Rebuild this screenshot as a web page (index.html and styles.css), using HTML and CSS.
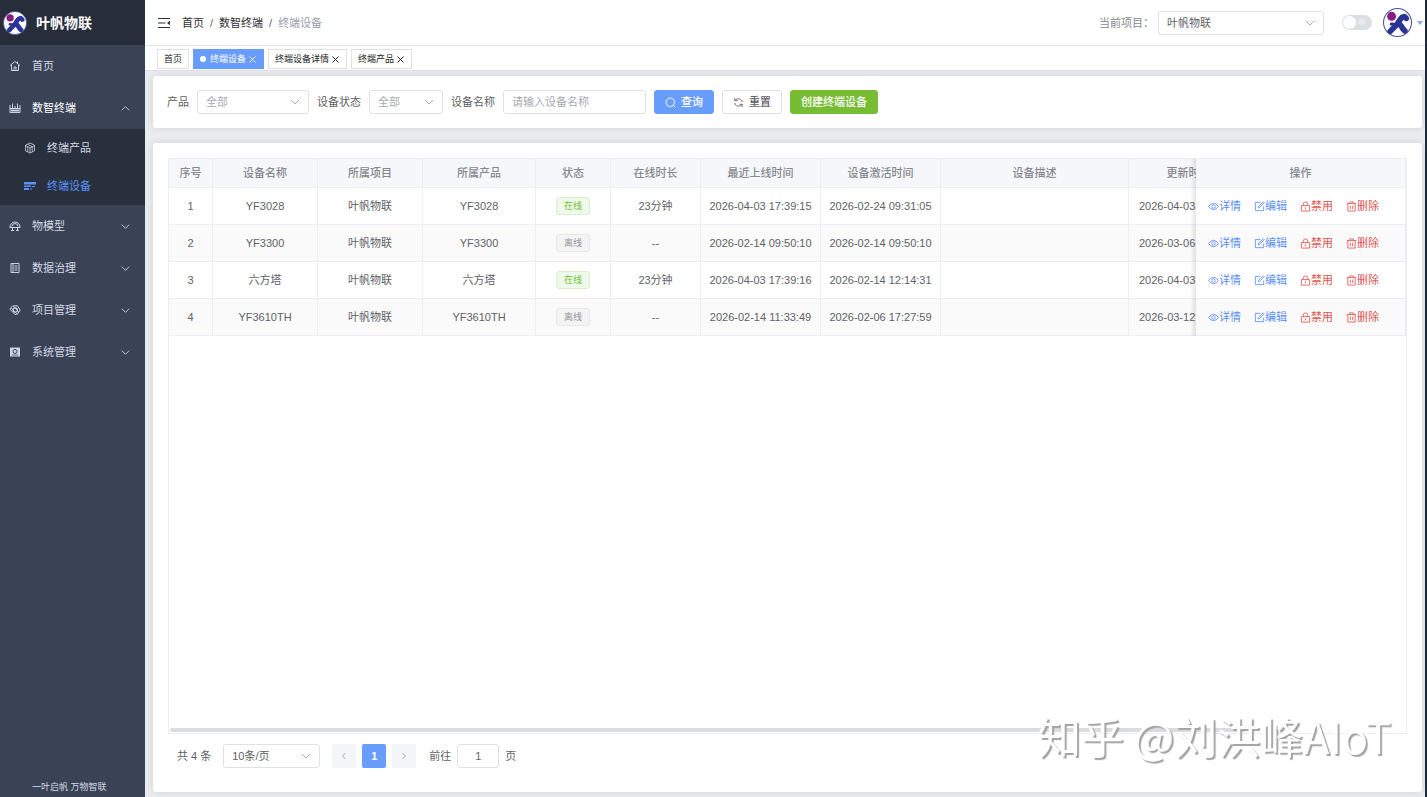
FILE: index.html
```html
<!DOCTYPE html>
<html lang="zh-CN">
<head>
<meta charset="utf-8">
<title>叶帆物联 - 终端设备</title>
<link rel="stylesheet" href="styles.css">
</head>
<body>
<svg class="sprite" aria-hidden="true">
  <symbol id="logo" viewBox="0 0 28 28"><circle cx="14" cy="14" r="13.5" fill="#fff" stroke="#4a528f" stroke-width="1"/><g fill="none" stroke="#2b3494" stroke-linecap="round" stroke-linejoin="round"><path d="M22.500 10c-1.500-2.500-4-2-5.500.5L13.500 16 7 22.500" stroke-width="5.400"/><path d="M14.500 15c3.500 1 3.500 4.500 6.500 7" stroke-width="5.600"/><path d="M8 15.500l5 .5" stroke-width="3"/></g><circle cx="8.300" cy="8" r="4.300" fill="#8a1c86"/></symbol>
  <symbol id="down" viewBox="0 0 12 12"><path d="M2 4l4 4 4-4" fill="none" stroke="currentColor"/></symbol>
  <symbol id="up" viewBox="0 0 12 12"><path d="M2 8l4-4 4 4" fill="none" stroke="currentColor"/></symbol>
  <symbol id="left" viewBox="0 0 12 12"><path d="M7.500 3l-3 3 3 3" fill="none" stroke="currentColor"/></symbol>
  <symbol id="right" viewBox="0 0 12 12"><path d="M4.500 3l3 3-3 3" fill="none" stroke="currentColor"/></symbol>
  <symbol id="close" viewBox="0 0 12 12"><path d="M2 2l8 8m0-8l-8 8" fill="none" stroke="currentColor" stroke-width="1.300"/></symbol>
  <symbol id="fold" viewBox="0 0 12 12"><path d="M0 1.500h12M0 6h7.500M0 10.500h12" fill="none" stroke="currentColor" stroke-width="1.200"/><path d="M12 3.800v4.400L9 6z" fill="currentColor"/></symbol>
  <symbol id="home" viewBox="0 0 12 12"><path d="M1 5.500L6 1.500l5 4M2.500 5v5.500h7V5M5 10.500V7h2v3.500M8.500 1.500v2" fill="none" stroke="currentColor"/></symbol>
  <symbol id="hub" viewBox="0 0 12 12"><path d="M1 6.500h10v4H1zM3.500 6V1.500M8.500 6V1.500M6 6V4M1 3v4M11 3v4" fill="none" stroke="currentColor"/><path d="M2 7.500h8v2H2z" fill="currentColor"/></symbol>
  <symbol id="cube" viewBox="0 0 12 12"><path d="M6 1l4.500 2.200v5.600L6 11 1.500 8.800V3.200zM1.500 3.500L6 6l4.500-2.500M6 6v5M3.800 4.800v5M8.200 4.800v5M3.800 2.500L8 4.600" fill="none" stroke="currentColor" stroke-width=".8"/></symbol>
  <symbol id="device" viewBox="0 0 12 12"><path d="M0 2h12v2.500H0zM0 5.500h7V7H0zM0 8h5v2H0zM8 6h3v1H8zM6 8.500h2v1H6z" fill="currentColor"/></symbol>
  <symbol id="model" viewBox="0 0 12 12"><path d="M1 7a5 5 0 0110 0M3 6.500a3 3 0 016 0M0.500 7.500h11M3.500 8v3M8.500 8v3M2 10.500h3M7 10.500h3" fill="none" stroke="currentColor"/></symbol>
  <symbol id="book" viewBox="0 0 12 12"><path d="M2 1.500h8v9H2zM4 1.500v9M5.500 4h3M5.500 6h3M5.500 8h3" fill="none" stroke="currentColor"/></symbol>
  <symbol id="project" viewBox="0 0 12 12"><path d="M3.500 2l5-.2L11.200 6 8.500 10 6 10.500.8 5z" fill="none" stroke="currentColor"/><circle cx="6.200" cy="6" r="2.200" fill="none" stroke="currentColor" stroke-width="1.200"/><path d="M2 4l6 6M4 2l6 6" stroke="currentColor" stroke-width=".7"/></symbol>
  <symbol id="system" viewBox="0 0 12 12"><path d="M1 1.500h10v9H1z" fill="currentColor"/><circle cx="6" cy="5.500" r="2" fill="none" stroke="#3a4356"/><path d="M3 9h6" stroke="#3a4356" stroke-width=".7"/></symbol>
  <symbol id="search" viewBox="0 0 12 12"><circle cx="5.800" cy="5.800" r="4.600" fill="none" stroke="currentColor"/><path d="M9 9l2.200 2.200" stroke="currentColor"/></symbol>
  <symbol id="refresh" viewBox="0 0 12 12"><path d="M2 1v3h3M2.200 3.800C4 1.500 8 1.200 9.800 4.200v1.300M10 11V8H7M9.800 8.200C8 10.500 4 10.800 2.200 7.800V6.500" fill="none" stroke="currentColor"/></symbol>
  <symbol id="eye" viewBox="0 0 12 12"><path d="M.5 6Q6-1 11.500 6 6 13 .5 6z" fill="none" stroke="currentColor" stroke-width=".9"/><circle cx="6" cy="6" r="1.900" fill="none" stroke="currentColor" stroke-width=".9"/></symbol>
  <symbol id="edit" viewBox="0 0 12 12"><path d="M7 1.500H1.500v9h9V6M4.500 7.500l.3-1.500L10.200.8l1 1L6 7.200z" fill="none" stroke="currentColor" stroke-width=".9"/></symbol>
  <symbol id="lock" viewBox="0 0 12 12"><path d="M1.500 5h9v6h-9zM3.500 5V3.500a2.500 2.500 0 015 0V5M6 7v2" fill="none" stroke="currentColor" stroke-width=".9"/></symbol>
  <symbol id="trash" viewBox="0 0 12 12"><path d="M.8 2.800h10.400M4 2.800V1h4v1.800M2 2.800V11h8V2.800M4.700 5v4M7.300 5v4" fill="none" stroke="currentColor" stroke-width=".9"/></symbol>
</svg>
<div class="app">
  <aside class="side">
    <div class="brand"><svg class="brand-logo"><use href="#logo"/></svg><strong>叶帆物联</strong></div>
    <nav class="menu">
      <a class="item" href="#"><svg class="ico"><use href="#home"/></svg>首页</a>
      <a class="item open" href="#"><svg class="ico"><use href="#hub"/></svg>数智终端<svg class="ico arrow"><use href="#up"/></svg></a>
      <div class="sub">
        <a class="subitem" href="#"><svg class="ico"><use href="#cube"/></svg>终端产品</a>
        <a class="subitem active" href="#"><svg class="ico"><use href="#device"/></svg>终端设备</a>
      </div>
      <a class="item" href="#"><svg class="ico"><use href="#model"/></svg>物模型<svg class="ico arrow"><use href="#down"/></svg></a>
      <a class="item" href="#"><svg class="ico"><use href="#book"/></svg>数据治理<svg class="ico arrow"><use href="#down"/></svg></a>
      <a class="item" href="#"><svg class="ico"><use href="#project"/></svg>项目管理<svg class="ico arrow"><use href="#down"/></svg></a>
      <a class="item" href="#"><svg class="ico"><use href="#system"/></svg>系统管理<svg class="ico arrow"><use href="#down"/></svg></a>
    </nav>
    <div class="slogan">一叶启帆 万物智联</div>
  </aside>
  <div class="body">
    <header class="top">
      <button class="plain" aria-label="折叠菜单"><svg class="ico"><use href="#fold"/></svg></button>
      <nav class="crumbs"><a href="#">首页</a><i>/</i><a href="#">数智终端</a><i>/</i><span>终端设备</span></nav>
      <div class="tools">
        <label for="project-select">当前项目：</label>
        <div class="select wide"><select id="project-select"><option>叶帆物联</option></select><svg class="ico"><use href="#down"/></svg></div>
        <input class="switch" type="checkbox" role="switch" aria-label="主题">
        <button class="plain user" aria-label="用户"><svg class="avatar"><use href="#logo"/></svg><i class="caret"></i></button>
      </div>
    </header>
    <nav class="tags">
      <a class="tag" href="#">首页</a>
      <a class="tag current" href="#"><i class="dot"></i>终端设备<svg class="x"><use href="#close"/></svg></a>
      <a class="tag" href="#">终端设备详情<svg class="x"><use href="#close"/></svg></a>
      <a class="tag" href="#">终端产品<svg class="x"><use href="#close"/></svg></a>
    </nav>
    <main class="main">
      <form class="card filters">
        <label for="product">产品</label>
        <div class="select product"><select id="product" class="muted"><option>全部</option></select><svg class="ico"><use href="#down"/></svg></div>
        <label for="state">设备状态</label>
        <div class="select state"><select id="state" class="muted"><option>全部</option></select><svg class="ico"><use href="#down"/></svg></div>
        <label for="name">设备名称</label>
        <input id="name" class="text name" type="text" placeholder="请输入设备名称">
        <button class="btn primary" type="button"><svg class="ico"><use href="#search"/></svg>查询</button>
        <button class="btn" type="button"><svg class="ico"><use href="#refresh"/></svg>重置</button>
        <button class="btn success" type="button">创建终端设备</button>
      </form>
      <section class="card list">
        <div class="table-box">
          <table>
            <colgroup><col class="w44"><col class="w105"><col class="w105"><col class="w113"><col class="w75"><col class="w90"><col class="w120"><col class="w120"><col><col class="w120"><col class="w210"></colgroup>
            <thead><tr><th>序号</th><th>设备名称</th><th>所属项目</th><th>所属产品</th><th>状态</th><th>在线时长</th><th>最近上线时间</th><th>设备激活时间</th><th>设备描述</th><th>更新时间</th><th class="fixed">操作</th></tr></thead>
            <tbody>
              <tr><td>1</td><td>YF3028</td><td>叶帆物联</td><td>YF3028</td><td><span class="badge on">在线</span></td><td>23分钟</td><td>2026-04-03 17:39:15</td><td>2026-02-24 09:31:05</td><td></td><td class="date">2026-04-03</td><td class="fixed"><div class="ops"><button><svg class="ico"><use href="#eye"/></svg>详情</button><button><svg class="ico"><use href="#edit"/></svg>编辑</button><button class="danger"><svg class="ico"><use href="#lock"/></svg>禁用</button><button class="danger"><svg class="ico"><use href="#trash"/></svg>删除</button></div></td></tr>
              <tr><td>2</td><td>YF3300</td><td>叶帆物联</td><td>YF3300</td><td><span class="badge">离线</span></td><td>--</td><td>2026-02-14 09:50:10</td><td>2026-02-14 09:50:10</td><td></td><td class="date">2026-03-06</td><td class="fixed"><div class="ops"><button><svg class="ico"><use href="#eye"/></svg>详情</button><button><svg class="ico"><use href="#edit"/></svg>编辑</button><button class="danger"><svg class="ico"><use href="#lock"/></svg>禁用</button><button class="danger"><svg class="ico"><use href="#trash"/></svg>删除</button></div></td></tr>
              <tr><td>3</td><td>六方塔</td><td>叶帆物联</td><td>六方塔</td><td><span class="badge on">在线</span></td><td>23分钟</td><td>2026-04-03 17:39:16</td><td>2026-02-14 12:14:31</td><td></td><td class="date">2026-04-03</td><td class="fixed"><div class="ops"><button><svg class="ico"><use href="#eye"/></svg>详情</button><button><svg class="ico"><use href="#edit"/></svg>编辑</button><button class="danger"><svg class="ico"><use href="#lock"/></svg>禁用</button><button class="danger"><svg class="ico"><use href="#trash"/></svg>删除</button></div></td></tr>
              <tr><td>4</td><td>YF3610TH</td><td>叶帆物联</td><td>YF3610TH</td><td><span class="badge">离线</span></td><td>--</td><td>2026-02-14 11:33:49</td><td>2026-02-06 17:27:59</td><td></td><td class="date">2026-03-12</td><td class="fixed"><div class="ops"><button><svg class="ico"><use href="#eye"/></svg>详情</button><button><svg class="ico"><use href="#edit"/></svg>编辑</button><button class="danger"><svg class="ico"><use href="#lock"/></svg>禁用</button><button class="danger"><svg class="ico"><use href="#trash"/></svg>删除</button></div></td></tr>
            </tbody>
          </table>
          <div class="thumb"></div>
        </div>
        <div class="pager">
          <span>共 4 条</span>
          <div class="select size"><select aria-label="每页条数"><option>10条/页</option></select><svg class="ico"><use href="#down"/></svg></div>
          <div class="pages">
            <button aria-label="上一页"><svg class="ico"><use href="#left"/></svg></button>
            <button class="now">1</button>
            <button aria-label="下一页"><svg class="ico"><use href="#right"/></svg></button>
          </div>
          <label class="goto">前往<input class="text" type="text" value="1">页</label>
        </div>
      </section>
    </main>
  </div>
  <div class="watermark">知乎 @刘洪峰AIoT</div>
</div>
</body>
</html>
```
FILE: styles.css
```css
* { box-sizing: border-box; }
body { margin: 0; font: 11px/16px "Liberation Sans", "Noto Sans CJK SC", sans-serif; color: #606266; }
button, input, select { font: inherit; color: inherit; margin: 0; }
button { cursor: pointer; }
a { color: inherit; text-decoration: none; }
i { font-style: normal; }
.sprite { display: none; }
.ico { width: 12px; height: 12px; flex: none; }
.app { position: relative; display: flex; min-height: 100vh; border-right: 2px solid #1e2a3a; overflow: hidden; }

.side { width: 145px; flex: none; display: flex; flex-direction: column; background: #3a4356; color: #d3d8e2; }
.brand { height: 45px; display: flex; align-items: center; gap: 9px; padding-left: 3px; background: #272d3b; color: #fff; font-size: 14px; }
.brand-logo { width: 24px; height: 24px; }
.menu { flex: 1; }
.item { height: 42px; display: flex; align-items: center; gap: 11px; padding: 0 14px 0 9px; }
.item.open { color: #fff; }
.item .ico { color: #cdd3de; }
.item .arrow { width: 11px; height: 11px; margin-left: auto; }
.sub { background: #28303d; }
.subitem { height: 38px; display: flex; align-items: center; gap: 11px; padding-left: 24px; }
.subitem.active { color: #5b90fb; }
.slogan { padding: 0 0 2px 32px; font-size: 9px; }

.body { flex: 1; min-width: 0; display: flex; flex-direction: column; background: #ebecef; }
.top { height: 46px; display: flex; align-items: center; gap: 12px; padding: 0 2px 0 13px; background: #fff; border-bottom: 1px solid #e2e3e6; }
.plain { display: flex; align-items: center; padding: 0; border: 0; background: none; color: #303133; }
.crumbs { display: flex; gap: 5px; color: #303133; }
.crumbs i { color: #606266; padding: 0 1px; }
.crumbs span { color: #97a0ae; }
.tools { margin-left: auto; display: flex; align-items: center; color: #85888e; }
.user { gap: 5px; margin-left: 11px; }
.avatar { width: 29px; height: 29px; }
.caret { border: 3px solid transparent; border-top: 4px solid #85aaf0; border-bottom: 0; }
.switch { appearance: none; width: 30px; height: 15px; margin-left: 18px; padding: 1px; border-radius: 8px; background: radial-gradient(circle at 20px 7px, #e9eaee 3px, transparent 4px), #dcdee4; display: flex; }
.switch::before { content: ""; width: 13px; height: 13px; border-radius: 50%; background: #fff; }

.select { position: relative; height: 24px; }
.select select { appearance: none; width: 100%; height: 100%; padding: 0 8px; border: 1px solid #dfe1e6; border-radius: 3px; background: #fff; color: #606266; }
.select select.muted { color: #a8abb2; }
.select .ico { position: absolute; right: 8px; top: 6px; color: #a8abb2; pointer-events: none; }
.wide { width: 166px; margin-left: 4px; }
.product { width: 112px; }
.state { width: 74px; }
.size { width: 97px; }
.text { height: 24px; padding: 0 8px; border: 1px solid #dfe1e6; border-radius: 3px; background: #fff; }
.text::placeholder { color: #a8abb2; }
.name { width: 143px; }

.tags { height: 25px; display: flex; align-items: flex-end; gap: 4px; padding: 0 0 1px 12px; background: #fff; border-bottom: 1px solid #dfe0e3; }
.tag { height: 20px; display: flex; align-items: center; gap: 2px; padding: 0 6px; border: 1px solid #dfe1e6; font-size: 9px; color: #222; }
.tag.current { background: #699dfd; border-color: #699dfd; color: #fff; }
.dot { width: 6px; height: 6px; margin-right: 2px; border-radius: 50%; background: #fff; }
.x { width: 9px; height: 9px; }

.main { flex: 1; display: flex; flex-direction: column; gap: 15px; padding: 5px 3px 5px 8px; }
.card { background: #fff; border-radius: 3px; box-shadow: 0 0 9px rgba(0, 0, 0, .11); }
.filters { display: flex; align-items: center; gap: 8px; padding: 14px; }
.btn { height: 24px; display: flex; align-items: center; gap: 5px; padding: 0 10px; border: 1px solid #dfe1e6; border-radius: 3px; background: #fff; font-weight: 500; }
.btn .ico { width: 11px; height: 11px; }
.btn.primary { background: #699dfd; border-color: #699dfd; color: #fff; }
.btn.success { background: #77bd34; border-color: #77bd34; color: #fff; }

.list { flex: 1; display: flex; flex-direction: column; gap: 10px; padding: 15px 15px 24px; min-width: 0; }
.table-box { position: relative; flex: 1; overflow: hidden; border: 1px solid #ebedf1; }
table { width: 100%; min-width: 1290px; table-layout: fixed; border-collapse: separate; border-spacing: 0; }
th, td { padding: 0; text-align: center; border-right: 1px solid #ebeef2; border-bottom: 1px solid #ebeef2; white-space: nowrap; }
th { height: 29px; background: #f5f7fa; color: #85888e; font-weight: 500; }
td { height: 37px; background: #fff; }
tbody tr:nth-child(even) td { background: #fafafa; }
.w44 { width: 44px; }
.w75 { width: 75px; }
.w90 { width: 90px; }
.w105 { width: 105px; }
.w113 { width: 113px; }
.w120 { width: 120px; }
.w210 { width: 210px; }
.fixed { position: sticky; right: 0; }
.fixed::before { content: ""; position: absolute; top: 0; bottom: -1px; left: -6px; width: 6px; background: linear-gradient(to left, rgba(0, 0, 0, .1), transparent); }
.date { text-align: left; padding-left: 10px; }
.badge { display: inline-block; padding: 0 7px; border: 1px solid #e6e7ea; border-radius: 3px; background: #f4f4f5; color: #909399; font-size: 9px; }
.badge.on { border-color: #dcf0cf; background: #eff9e9; color: #72bd38; }
.ops { display: flex; gap: 13px; padding-left: 12px; }
.ops button { display: flex; align-items: center; padding: 0; border: 0; background: none; color: #5b8ff5; }
.ops .ico { width: 11px; height: 11px; }
.ops button.danger { color: #df5450; }
.thumb { position: absolute; left: 1px; bottom: 1px; width: 87%; height: 4px; border-radius: 2px; background: #dbdcde; }

.pager { display: flex; align-items: center; gap: 12px; padding-left: 9px; }
.pages { display: flex; gap: 6px; }
.pages button { width: 24px; height: 24px; display: grid; place-items: center; padding: 0; border: 0; border-radius: 2px; background: #f4f5f8; color: #a8abb2; }
.pages button.now { background: #699dfd; color: #fff; font-weight: 700; }
.goto { display: flex; align-items: center; gap: 6px; margin-left: 1px; }
.goto .text { width: 42px; text-align: center; }

.watermark { position: absolute; right: 34px; bottom: 34px; font: 400 43px/56px "Noto Sans CJK SC", sans-serif; color: #fff; text-shadow: 2px 2px 1px #a4a4a4; pointer-events: none; }
```
